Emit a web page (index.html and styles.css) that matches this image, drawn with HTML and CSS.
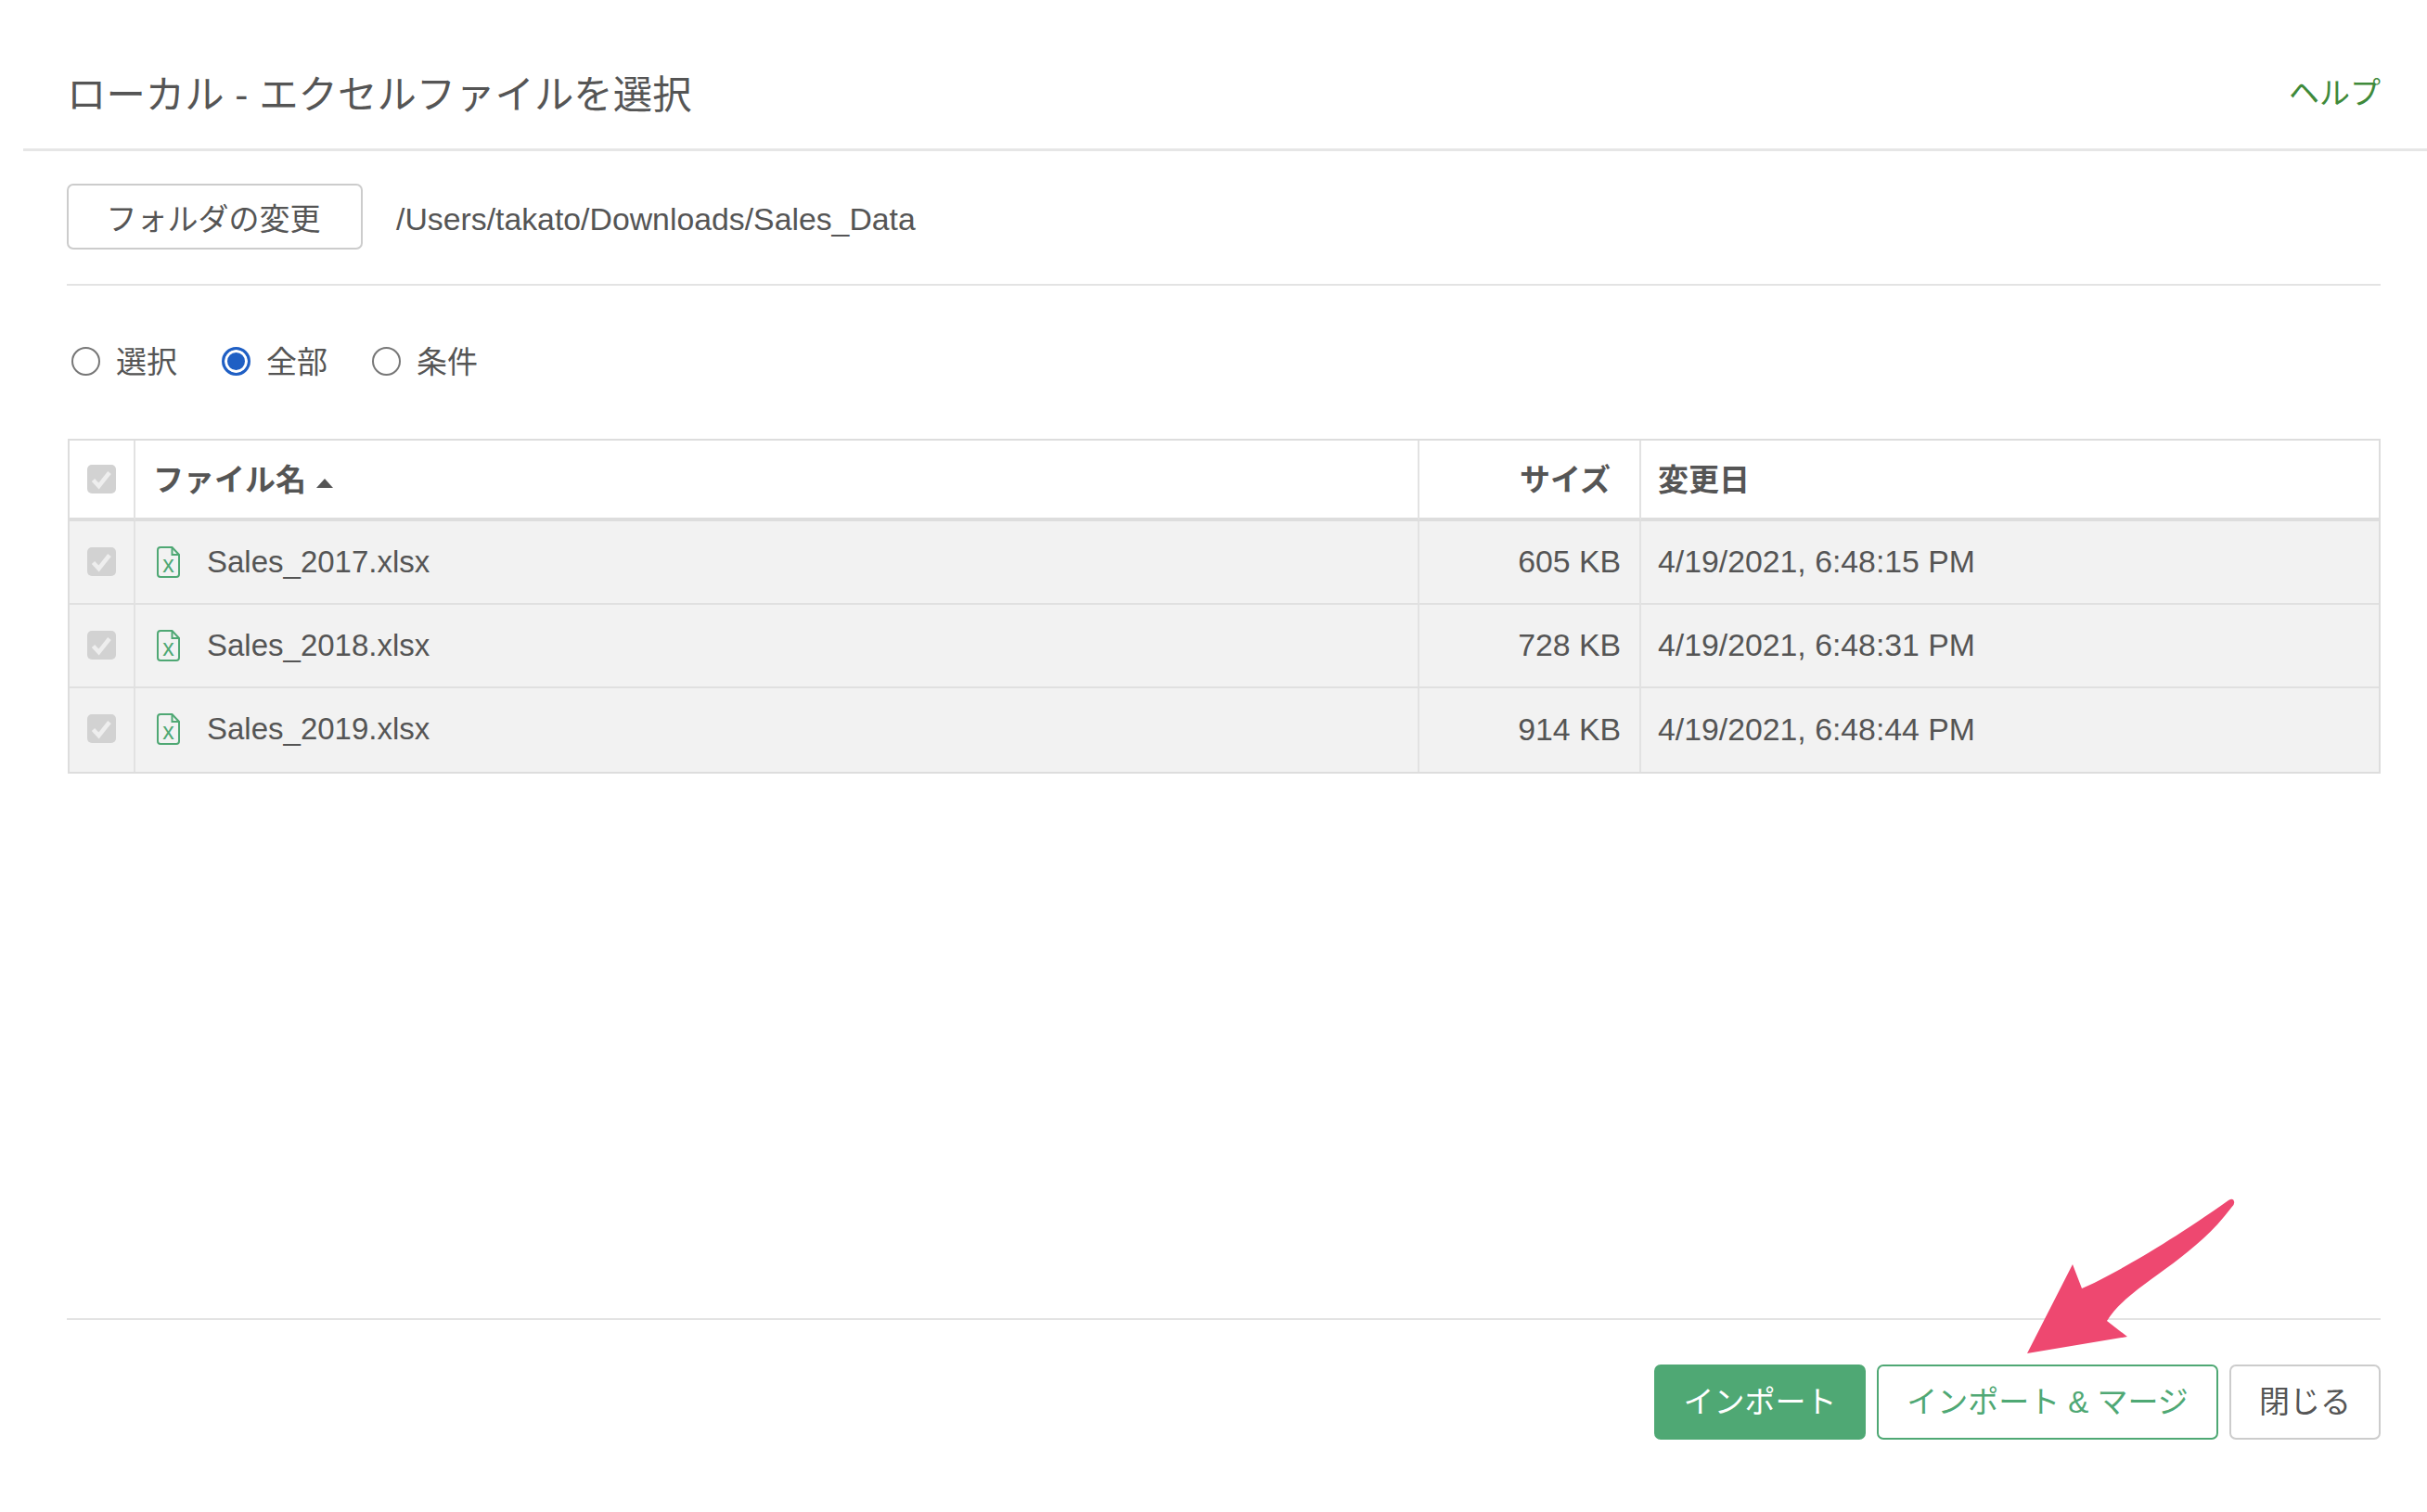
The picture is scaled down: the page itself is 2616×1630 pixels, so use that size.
FILE: index.html
```html
<!DOCTYPE html>
<html lang="ja">
<head>
<meta charset="utf-8">
<title>ローカル - エクセルファイルを選択</title>
<link rel="stylesheet" href="styles.css">
</head>
<body>
<div class="page">
  <header class="dialog-header">
    <h1 class="dialog-title">ローカル - エクセルファイルを選択</h1>
    <a class="help-link">ヘルプ</a>
  </header>
  <main class="content">
    <div class="folder-bar">
      <button class="btn btn-default btn-folder">フォルダの変更</button>
      <span class="folder-path">/Users/takato/Downloads/Sales_Data</span>
    </div>
    <div class="radio-row">
      <label class="radio-item"><span class="radio"></span><span class="radio-text">選択</span></label>
      <label class="radio-item"><span class="radio radio-on"></span><span class="radio-text">全部</span></label>
      <label class="radio-item"><span class="radio"></span><span class="radio-text">条件</span></label>
    </div>
    <table class="file-table">
      <colgroup>
        <col class="col-check"><col class="col-name"><col class="col-size"><col class="col-date">
      </colgroup>
      <thead>
        <tr>
          <th class="cell-check"><span class="check"><svg viewBox="0 0 31 31"><path d="M6.5 16.5l6 6.5L24 8.5" /></svg></span></th>
          <th class="cell-name-head">ファイル名<span class="caret"></span></th>
          <th class="cell-size-head">サイズ</th>
          <th class="cell-date">変更日</th>
        </tr>
      </thead>
      <tbody>
        <tr>
          <td class="cell-check"><span class="check"><svg viewBox="0 0 31 31"><path d="M6.5 16.5l6 6.5L24 8.5" /></svg></span></td>
          <td class="cell-name"><div class="file-name"><svg class="file-icon" viewBox="0 0 25 34"><path d="M4 1h12.5l7.5 8v21a3 3 0 0 1-3 3H4a3 3 0 0 1-3-3V4a3 3 0 0 1 3-3z"/><path d="M16.5 1v8H24"/><text x="12.5" y="28" text-anchor="middle">x</text></svg>Sales_2017.xlsx</div></td>
          <td class="cell-size">605 KB</td>
          <td class="cell-date">4/19/2021, 6:48:15 PM</td>
        </tr>
        <tr>
          <td class="cell-check"><span class="check"><svg viewBox="0 0 31 31"><path d="M6.5 16.5l6 6.5L24 8.5" /></svg></span></td>
          <td class="cell-name"><div class="file-name"><svg class="file-icon" viewBox="0 0 25 34"><path d="M4 1h12.5l7.5 8v21a3 3 0 0 1-3 3H4a3 3 0 0 1-3-3V4a3 3 0 0 1 3-3z"/><path d="M16.5 1v8H24"/><text x="12.5" y="28" text-anchor="middle">x</text></svg>Sales_2018.xlsx</div></td>
          <td class="cell-size">728 KB</td>
          <td class="cell-date">4/19/2021, 6:48:31 PM</td>
        </tr>
        <tr>
          <td class="cell-check"><span class="check"><svg viewBox="0 0 31 31"><path d="M6.5 16.5l6 6.5L24 8.5" /></svg></span></td>
          <td class="cell-name"><div class="file-name"><svg class="file-icon" viewBox="0 0 25 34"><path d="M4 1h12.5l7.5 8v21a3 3 0 0 1-3 3H4a3 3 0 0 1-3-3V4a3 3 0 0 1 3-3z"/><path d="M16.5 1v8H24"/><text x="12.5" y="28" text-anchor="middle">x</text></svg>Sales_2019.xlsx</div></td>
          <td class="cell-size">914 KB</td>
          <td class="cell-date">4/19/2021, 6:48:44 PM</td>
        </tr>
      </tbody>
    </table>
  </main>
  <footer class="dialog-footer">
    <button class="btn btn-primary">インポート</button>
    <button class="btn btn-outline">インポート &amp; マージ</button>
    <button class="btn btn-default">閉じる</button>
  </footer>
  <svg class="arrow" viewBox="2170 1280 250 190"><path d="M2402 1294Q2407 1291 2408 1295Q2409 1299 2405 1302C2360 1362 2295 1385 2271 1424L2293 1441L2185 1459L2234 1363L2244 1389C2270 1378 2330 1345 2402 1294Z"/></svg>
</div>
</body>
</html>
```

FILE: styles.css
```css
* { box-sizing: border-box; }
html, body { margin: 0; padding: 0; background: #fff; }
body {
  font-family: "Liberation Sans", "Noto Sans CJK JP", sans-serif;
  color: #555;
  font-size: 33px;
}
.page {
  position: relative;
  height: 1630px;
  overflow: hidden;
  display: flex;
  flex-direction: column;
}
.dialog-header {
  margin-left: 25px;
  height: 163px;
  padding: 36px 50px 0 47px;
  border-bottom: 3px solid #e6e6e6;
  display: flex;
  justify-content: space-between;
  align-items: center;
}
.dialog-title { margin: 0; font-size: 42.4px; font-weight: 400; color: #555; }
.help-link { font-size: 33px; color: #3f8a3a; }
.content { padding: 0 50px 0 72px; }
.folder-bar {
  display: flex;
  align-items: center;
  gap: 36px;
  padding: 35px 0 37px;
  border-bottom: 2px solid #e3e3e3;
}
.folder-path { font-size: 33.8px; color: #555; padding-top: 5px; }
.btn {
  font-family: inherit;
  font-size: 33px;
  height: 81px;
  border-radius: 7px;
  border: 2px solid #ccc;
  background: #fff;
  color: #555;
  padding: 0 0 5px;
}
.btn-default { width: 163px; }
.btn-folder.btn-default { width: 319px; height: 71px; font-size: 33px; padding: 0 3px 0 0; }
.btn-primary { width: 228px; background: #4fa874; border-color: #4fa874; color: #fff; }
.btn-outline { width: 368px; border-color: #4fa874; color: #4fa874; }
.radio-row {
  height: 165px;
  display: flex;
  align-items: center;
  gap: 48px;
  padding: 0 0 2px 5px;
}
.radio-item { display: flex; align-items: center; gap: 17px; font-size: 33px; }
.radio-text { margin-bottom: 4px; }
.radio {
  width: 31px;
  height: 31px;
  border-radius: 50%;
  border: 2px solid #777;
  background: #fff;
}
.radio-on {
  border: 3px solid #1f5fc4;
  background: #1f5fc4;
  box-shadow: inset 0 0 0 3px #fff;
}
.file-table {
  margin-left: 1px;
  width: 2493px;
  table-layout: fixed;
  border-collapse: separate;
  border-spacing: 0;
  border: 2px solid #ddd;
  font-size: 33.8px;
}
.col-check { width: 71px; }
.col-name { width: 1384px; }
.col-size { width: 239px; }
.file-table th, .file-table td {
  padding: 0 20px;
  border-right: 2px solid #e2e2e2;
  text-align: left;
  color: #555;
}
.file-table th:last-child, .file-table td:last-child { border-right: 0; }
.file-table thead th {
  height: 87px;
  font-size: 33px;
  font-weight: 700;
  border-bottom: 4px solid #ddd;
  padding-bottom: 3px;
}
.file-table tbody td {
  height: 90px;
  background: #f2f2f2;
  border-bottom: 2px solid #e0e0e0;
  padding-bottom: 1px;
}
.file-table tbody tr:last-child td { border-bottom: 0; padding-bottom: 2px; }
.file-table .cell-check { padding: 0; text-align: center; }
.file-table thead .cell-check { padding-bottom: 0; }
.check {
  display: block;
  width: 31px;
  height: 31px;
  margin: 0 0 0 19px;
  background: #d2d2d2;
  border-radius: 5px;
}
tbody .check { margin-bottom: 2px; }
.check svg { display: block; width: 31px; height: 31px; fill: none; stroke: #eee; stroke-width: 4.5; }
.file-table .cell-name-head { white-space: nowrap; padding-left: 19px; }
.caret {
  display: inline-block;
  margin-left: 11px;
  vertical-align: 3px;
  border-left: 9px solid transparent;
  border-right: 9px solid transparent;
  border-bottom: 10px solid #555;
}
.file-table .cell-size-head { text-align: right; padding-right: 31px; }
.file-table .cell-size { text-align: right; }
.file-table .cell-date { padding-left: 18px; }
.file-table .cell-name { padding-left: 23px; font-size: 33px; }
.file-name { display: flex; align-items: center; gap: 29px; }
.file-icon { width: 25px; height: 34px; flex: none; fill: none; stroke: #4fa874; stroke-width: 2; }
.file-icon text { fill: #4fa874; stroke: none; font-size: 25px; font-family: "Liberation Sans", sans-serif; }
.dialog-footer {
  margin: auto 50px 0 72px;
  padding: 48px 0 78px;
  border-top: 2px solid #e3e3e3;
  display: flex;
  justify-content: flex-end;
  gap: 12px;
}
.arrow { position: absolute; left: 2170px; top: 1280px; width: 250px; height: 190px; }
.arrow path { fill: #ee4870; }
```
